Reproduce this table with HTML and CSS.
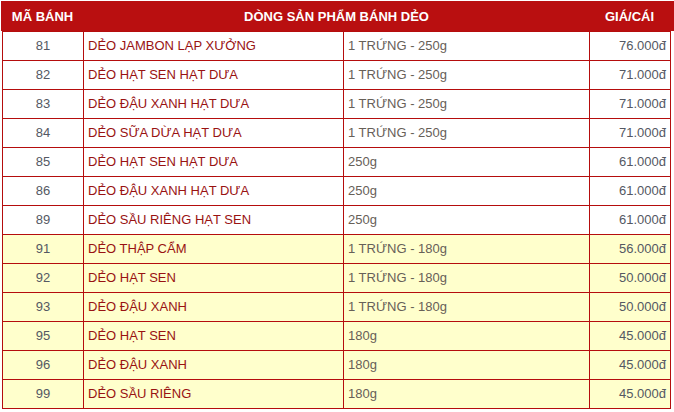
FILE: index.html
```html
<!DOCTYPE html>
<html lang="vi">
<head>
<meta charset="utf-8">
<title>Bánh dẻo</title>
<link rel="stylesheet" href="styles.css">
</head>
<body>
<div class="page">
  <div class="head">
    <div class="h-code">MÃ BÁNH</div>
    <div class="h-name">DÒNG SẢN PHẨM BÁNH DẺO</div>
    <div class="h-price">GIÁ/CÁI</div>
  </div>
  <table class="list">
    <colgroup>
      <col class="c-code"><col class="c-name"><col class="c-size"><col class="c-price">
    </colgroup>
    <tbody>
      <tr><td class="code">81</td><td class="name">DẺO JAMBON LẠP XƯỞNG</td><td class="size">1 TRỨNG - 250g</td><td class="price">76.000đ</td></tr>
      <tr><td class="code">82</td><td class="name">DẺO HẠT SEN HẠT DƯA</td><td class="size">1 TRỨNG - 250g</td><td class="price">71.000đ</td></tr>
      <tr><td class="code">83</td><td class="name">DẺO ĐẬU XANH HẠT DƯA</td><td class="size">1 TRỨNG - 250g</td><td class="price">71.000đ</td></tr>
      <tr><td class="code">84</td><td class="name">DẺO SỮA DỪA HẠT DƯA</td><td class="size">1 TRỨNG - 250g</td><td class="price">71.000đ</td></tr>
      <tr><td class="code">85</td><td class="name">DẺO HẠT SEN HẠT DƯA</td><td class="size">250g</td><td class="price">61.000đ</td></tr>
      <tr><td class="code">86</td><td class="name">DẺO ĐẬU XANH HẠT DƯA</td><td class="size">250g</td><td class="price">61.000đ</td></tr>
      <tr><td class="code">89</td><td class="name">DẺO SẦU RIÊNG HẠT SEN</td><td class="size">250g</td><td class="price">61.000đ</td></tr>
      <tr class="alt"><td class="code">91</td><td class="name">DẺO THẬP CẨM</td><td class="size">1 TRỨNG - 180g</td><td class="price">56.000đ</td></tr>
      <tr class="alt"><td class="code">92</td><td class="name">DẺO HẠT SEN</td><td class="size">1 TRỨNG - 180g</td><td class="price">50.000đ</td></tr>
      <tr class="alt"><td class="code">93</td><td class="name">DẺO ĐẬU XANH</td><td class="size">1 TRỨNG - 180g</td><td class="price">50.000đ</td></tr>
      <tr class="alt"><td class="code">95</td><td class="name">DẺO HẠT SEN</td><td class="size">180g</td><td class="price">45.000đ</td></tr>
      <tr class="alt"><td class="code">96</td><td class="name">DẺO ĐẬU XANH</td><td class="size">180g</td><td class="price">45.000đ</td></tr>
      <tr class="alt"><td class="code">99</td><td class="name">DẺO SẦU RIÊNG</td><td class="size">180g</td><td class="price">45.000đ</td></tr>
    </tbody>
  </table>
</div>
</body>
</html>
```
FILE: styles.css
```css
html, body {
  margin: 0;
  padding: 0;
  background: #ffffff;
}
body {
  font-family: "Liberation Sans", Arial, sans-serif;
  font-size: 13px;
}
.page {
  padding-top: 1px;
}
.head {
  margin-left: 1px;
  height: 30px;
  background: #b90f10;
  color: #ffffff;
  font-weight: bold;
  font-size: 13px;
  display: grid;
  grid-template-columns: 83px 505px 81px 1fr;
  align-items: center;
}
.head > div {
  text-align: center;
}
.list {
  margin-left: 2px;
  border-collapse: collapse;
  table-layout: fixed;
  width: 668px;
}
.c-code { width: 81px; }
.c-name { width: 260px; }
.c-size { width: 246px; }
.c-price { width: 81px; }
.list td {
  border: 1px solid #b50d0d;
  height: 27px;
  padding: 0 4px 1px;
  line-height: 15px;
  vertical-align: middle;
  white-space: nowrap;
}
.list tr.alt td {
  background: #ffffcc;
}
.code {
  text-align: center;
  color: #545863;
}
.name {
  color: #991212;
}
.size {
  color: #676058;
}
.price {
  text-align: right;
  color: #545863;
}
```
